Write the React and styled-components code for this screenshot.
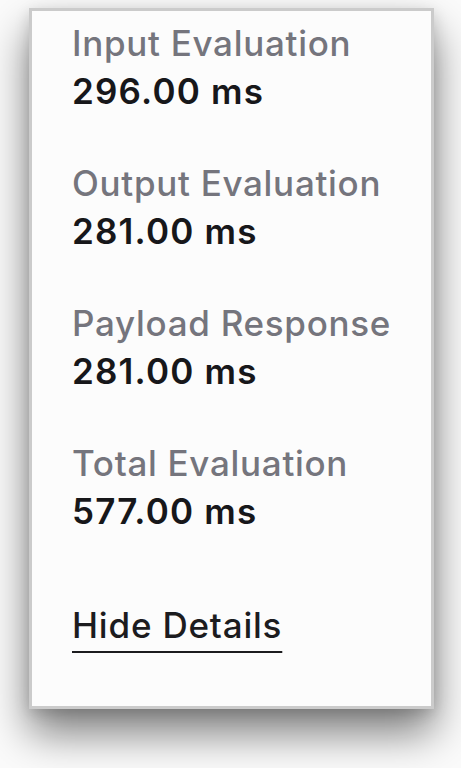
import React from "react";
import styled, { createGlobalStyle } from "styled-components";

const Global = createGlobalStyle`
  html, body { margin: 0; padding: 0; background: #fbfbfb; }
  body { font-family: Inter, "Noto Sans", sans-serif; -webkit-font-smoothing: antialiased; }
`;

const Page = styled.div`
  padding: 8px 27px 0 29px;
  height: 768px;
  box-sizing: border-box;
  overflow: hidden;
`;

const Card = styled.section`
  width: 405px;
  height: 701px;
  box-sizing: border-box;
  background: #fcfcfc;
  border: 3px solid #cbcbcb;
  box-shadow: 0 24px 40px rgba(0, 0, 0, 0.5), 0 4px 14px rgba(0, 0, 0, 0.14);
  padding: 8px 0 0 40px;
  display: flex;
  flex-direction: column;
`;

const Metric = styled.div`
  display: flex;
  flex-direction: column;
  margin-bottom: 44px;
`;

const Label = styled.div`
  font-size: 35px;
  line-height: 48px;
  font-weight: 500;
  color: #75757d;
  letter-spacing: 0.7px;
`;

const Value = styled.div`
  font-size: 35px;
  line-height: 48px;
  font-weight: 600;
  color: #17171a;
  letter-spacing: 1.2px;
`;

const Toggle = styled.a`
  margin-top: 22px;
  align-self: flex-start;
  font-size: 35px;
  line-height: 48px;
  font-weight: 500;
  color: #1c1c1f;
  letter-spacing: 0.8px;
  text-decoration: underline;
  text-decoration-thickness: 2px;
  text-underline-offset: 13px;
  cursor: pointer;
`;

const metrics = [
  ["Input Evaluation", "296.00 ms"],
  ["Output Evaluation", "281.00 ms"],
  ["Payload Response", "281.00 ms"],
  ["Total Evaluation", "577.00 ms"],
];

export default function App() {
  return (
    <Page>
      <Global />
      <Card>
        {metrics.map(([l, v]) => (
          <Metric key={l}>
            <Label>{l}</Label>
            <Value>{v}</Value>
          </Metric>
        ))}
        <Toggle>Hide Details</Toggle>
      </Card>
    </Page>
  );
}
